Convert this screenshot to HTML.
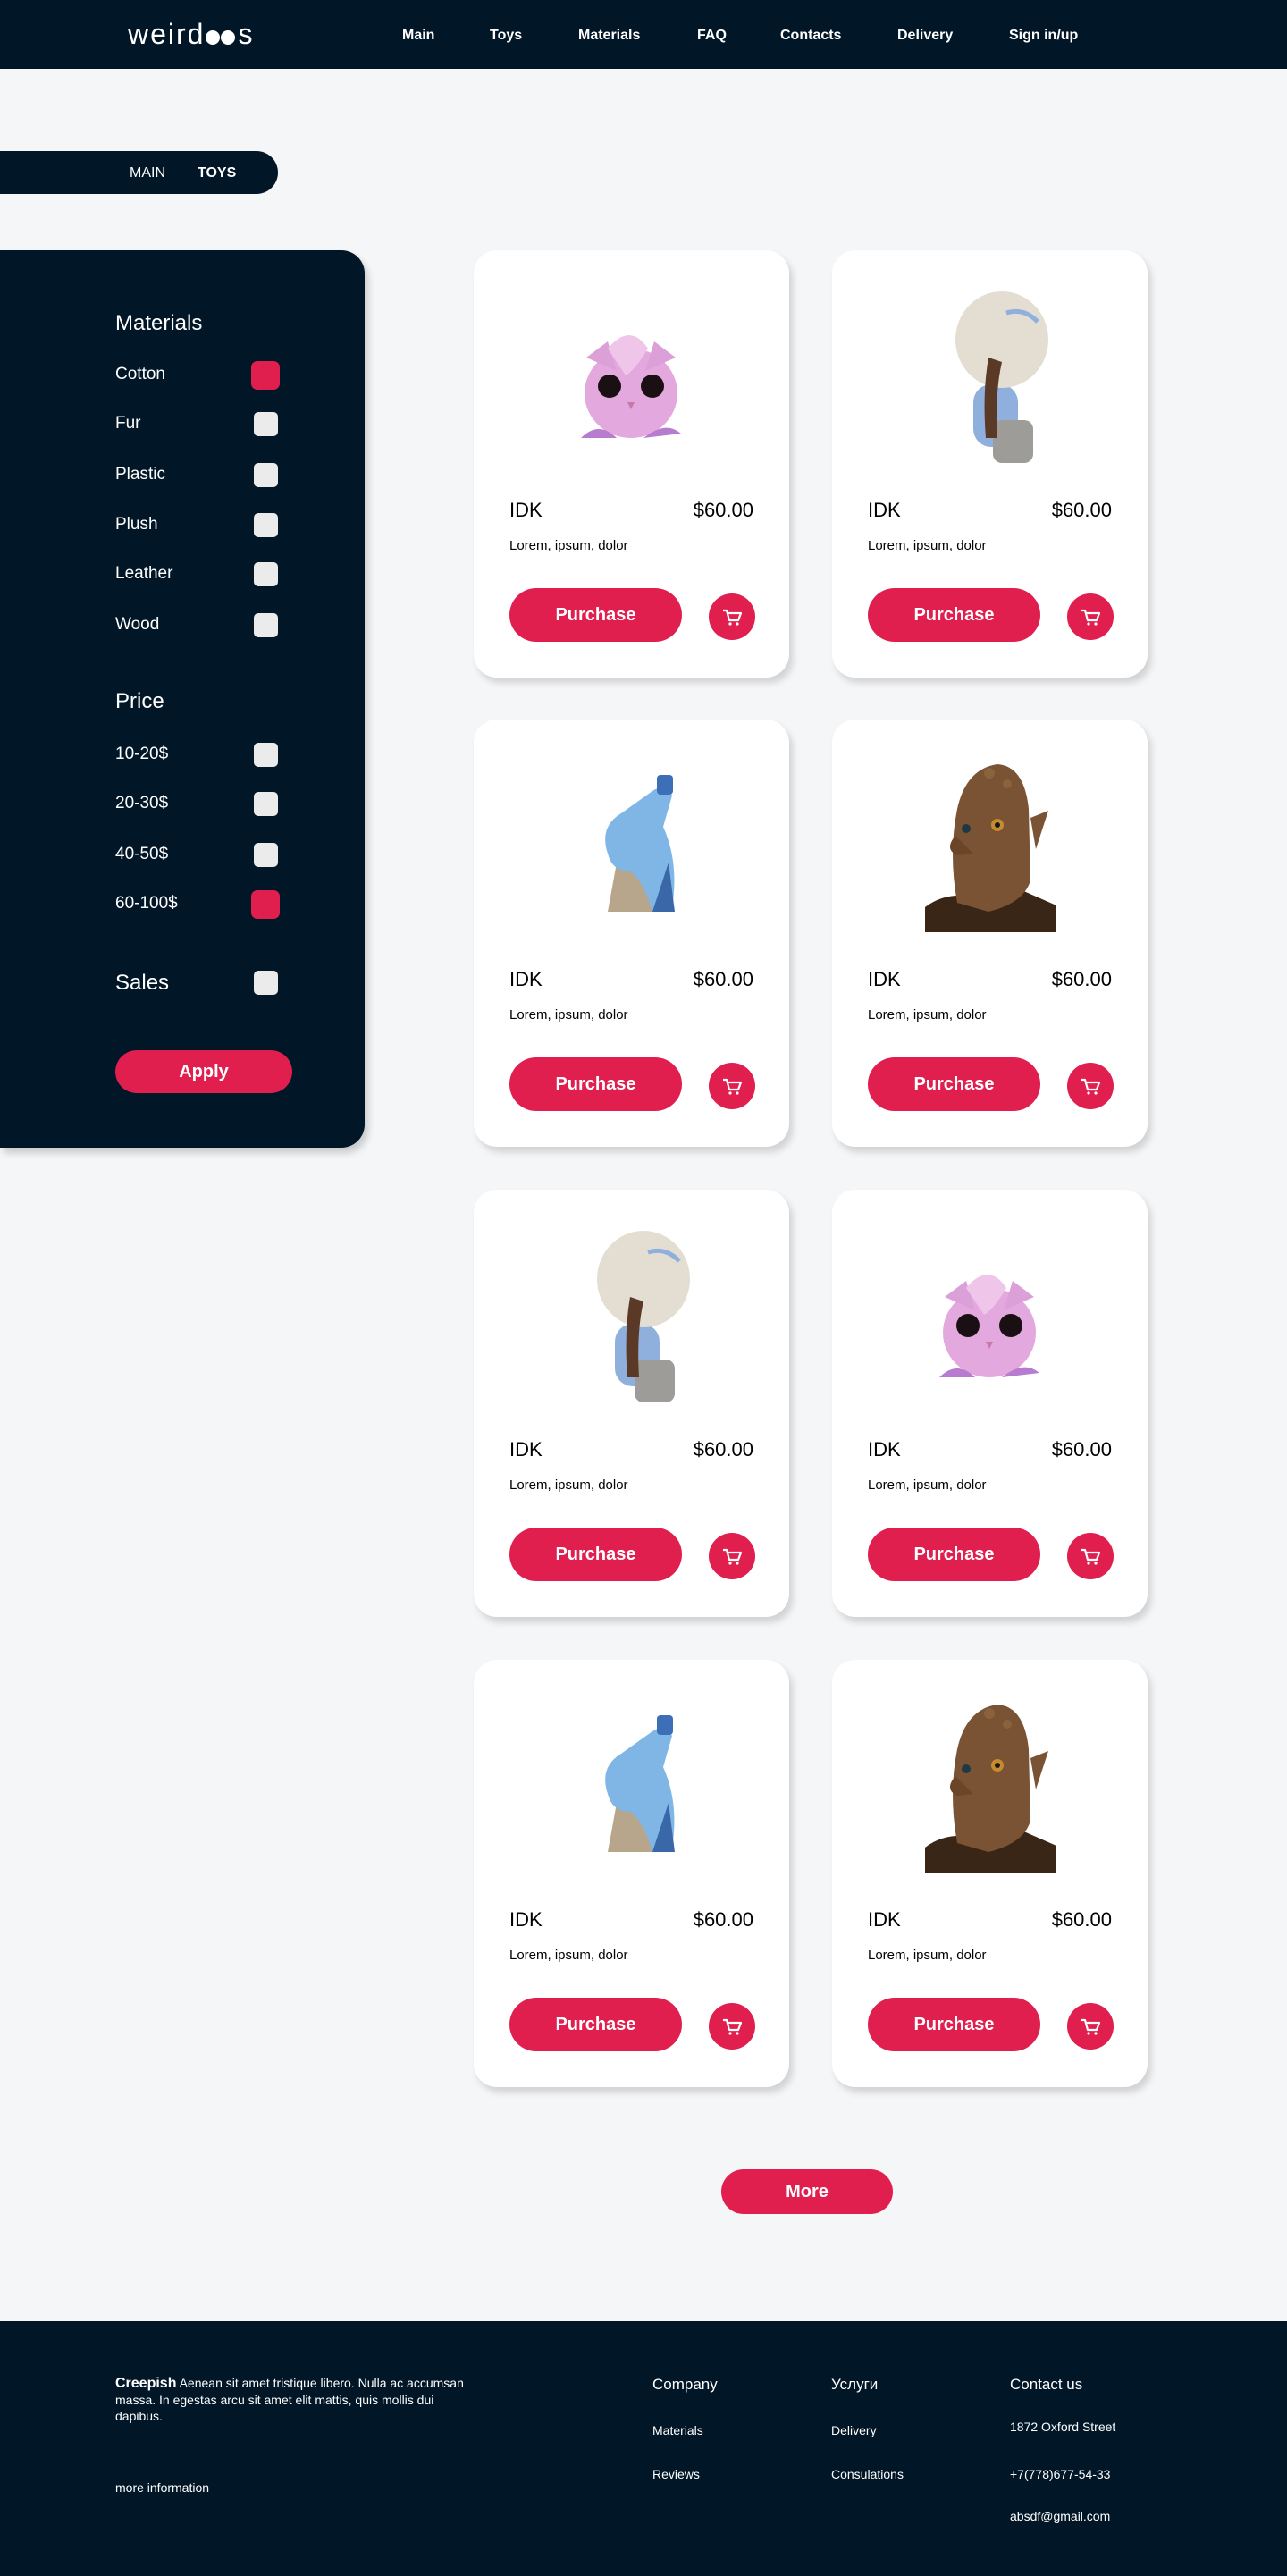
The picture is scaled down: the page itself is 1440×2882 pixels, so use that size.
<!DOCTYPE html>
<html><head><meta charset="utf-8">
<style>
*{margin:0;padding:0;box-sizing:border-box}
body{width:1440px;height:2882px;background:#f5f6f8;font-family:"Liberation Sans",Arial,sans-serif;position:relative;overflow:hidden}
.hdr{position:absolute;left:0;top:0;width:1440px;height:77px;background:#011627}
.logo{position:absolute;left:143px;top:20px;color:#fff;font-size:32px;letter-spacing:2px}
.nav a{position:absolute;top:31px;color:#fff;font-weight:bold;font-size:16px;text-decoration:none}
.crumb{position:absolute;left:0;top:169px;width:311px;height:48px;background:#011627;border-radius:0 24px 24px 0;color:#fff;font-size:16px}
.crumb span{position:absolute;top:16px}
.side{position:absolute;left:0;top:280px;width:408px;height:1004px;background:#011627;border-radius:0 26px 26px 0;box-shadow:4px 6px 8px rgba(0,0,0,.18);color:#fff}
.side h3{position:absolute;left:129px;font-weight:normal;font-size:24px}
.side .r{position:absolute;left:129px;font-size:19px}
.cb{position:absolute;left:284px;width:27px;height:27px;border-radius:5px;background:#ebebeb}
.cb.on{left:281px;width:32px;height:32px;background:#e01f4f;border-radius:7px}
.btn{position:absolute;background:#e01f4f;color:#fff;font-weight:bold;text-align:center;border-radius:30px}
.card{position:absolute;width:353px;height:478px;background:#fff;border-radius:26px;box-shadow:4px 6px 8px rgba(0,0,0,.15)}
.card svg{position:absolute;left:0;top:40px}
.card .n{position:absolute;left:40px;top:278px;font-size:22px;color:#000}
.card .p{position:absolute;right:40px;top:278px;font-size:22px;color:#000}
.card .d{position:absolute;left:40px;top:322px;font-size:15px;color:#000}
.card .pb{left:40px;top:378px;width:193px;height:60px;line-height:60px;font-size:20px}
.card .cart{position:absolute;left:263px;top:384px;width:52px;height:52px;border-radius:50%;background:#e01f4f}
.ft{position:absolute;left:0;top:2597px;width:1440px;height:285px;background:#011627;color:#fff}
.ft div{position:absolute}
</style></head><body>
<div class="hdr">
<div class="logo">weird<span style="display:inline-block;width:16px;height:16px;border-radius:50%;background:#fff;margin:0 1px -1px 1px"></span><span style="display:inline-block;width:16px;height:16px;border-radius:50%;background:#fff;margin:0 3px -1px 0"></span>s</div>
<div class="nav"><a style="left:450px">Main</a><a style="left:548px">Toys</a><a style="left:647px">Materials</a><a style="left:780px">FAQ</a><a style="left:873px">Contacts</a><a style="left:1004px">Delivery</a><a style="left:1129px">Sign in/up</a></div>
</div>
<div class="crumb"><span style="left:145px">MAIN</span><span style="left:221px;font-weight:bold">TOYS</span></div>

<div class="side">
<h3 style="top:68px">Materials</h3>
<div class="r" style="top:128px">Cotton</div><div class="cb on" style="top:124px"></div>
<div class="r" style="top:183px">Fur</div><div class="cb" style="top:181px"></div>
<div class="r" style="top:240px">Plastic</div><div class="cb" style="top:238px"></div>
<div class="r" style="top:296px">Plush</div><div class="cb" style="top:294px"></div>
<div class="r" style="top:351px">Leather</div><div class="cb" style="top:349px"></div>
<div class="r" style="top:408px">Wood</div><div class="cb" style="top:406px"></div>
<h3 style="top:491px">Price</h3>
<div class="r" style="top:553px">10-20$</div><div class="cb" style="top:551px"></div>
<div class="r" style="top:608px">20-30$</div><div class="cb" style="top:606px"></div>
<div class="r" style="top:665px">40-50$</div><div class="cb" style="top:663px"></div>
<div class="r" style="top:720px">60-100$</div><div class="cb on" style="top:716px"></div>
<h3 style="top:806px">Sales</h3><div class="cb" style="top:806px"></div>
<div class="btn" style="left:129px;top:895px;width:198px;height:48px;line-height:48px;font-size:20px">Apply</div>
</div>

<div id="cards"></div>

<div class="btn" style="left:807px;top:2427px;width:192px;height:50px;line-height:50px;font-size:20px">More</div>

<div class="ft">
<div style="left:129px;top:60px;width:390px;font-size:14px;line-height:18px"><b style="font-size:16px">Creepish</b> Aenean sit amet tristique libero. Nulla ac accumsan massa. In egestas arcu sit amet elit mattis, quis mollis dui dapibus.</div>
<div style="left:129px;top:178px;font-size:14px">more information</div>
<div style="left:730px;top:61px;font-size:17px">Company</div>
<div style="left:730px;top:114px;font-size:14px">Materials</div>
<div style="left:730px;top:163px;font-size:14px">Reviews</div>
<div style="left:930px;top:61px;font-size:17px">Услуги</div>
<div style="left:930px;top:114px;font-size:14px">Delivery</div>
<div style="left:930px;top:163px;font-size:14px">Consulations</div>
<div style="left:1130px;top:61px;font-size:17px">Contact us</div>
<div style="left:1130px;top:110px;font-size:14px">1872 Oxford Street</div>
<div style="left:1130px;top:163px;font-size:14px">+7(778)677-54-33</div>
<div style="left:1130px;top:210px;font-size:14px">absdf@gmail.com</div>
</div>

<script>
var T={
pink:'<ellipse cx="176" cy="120" rx="52" ry="50" fill="#e3a8dd"/><path d="M126 80 L150 62 L160 95Z M226 80 L202 62 L192 95Z" fill="#dca0d8"/><path d="M150 70 Q175 40 195 70 Q180 95 170 100Z" fill="#f0c5ea"/><circle cx="152" cy="112" r="13" fill="#1a1014"/><circle cx="200" cy="112" r="13" fill="#1a1014"/><path d="M120 170 Q140 150 160 170Z M190 170 Q215 150 232 165Z" fill="#b77ccf"/><path d="M172 130 l8 0 l-4 8z" fill="#c77aa9"/>',
thinker:'<rect x="158" y="110" width="50" height="70" rx="20" fill="#8fb0dd"/><rect x="180" y="150" width="45" height="48" rx="10" fill="#9e9c98"/><ellipse cx="190" cy="60" rx="52" ry="54" fill="#e4ddd2"/><path d="M175 80 Q168 120 172 170 L185 170 Q182 120 190 85Z" fill="#5a3a26"/><path d="M195 30 q20 -6 35 10" stroke="#8fb0dd" stroke-width="5" fill="none"/>',
plastic:'<path d="M150 175 L160 120 Q175 105 200 115 L205 175Z" fill="#b7a58c"/><path d="M150 110 Q140 80 165 65 L200 40 Q215 30 222 45 L212 80 Q230 120 222 170 L200 175 Q190 140 175 130 Q155 130 150 110Z" fill="#7fb6e6"/><rect x="205" y="22" width="18" height="22" rx="4" fill="#3d6fb8"/><path d="M200 175 L225 175 L218 120Z" fill="#3a67a8"/>',
wood:'<path d="M104 198 L104 170 Q130 150 170 160 L210 150 L251 168 L251 198Z" fill="#3a2616"/><path d="M140 165 Q130 110 140 60 Q150 15 185 10 Q215 12 220 60 L222 140 Q215 165 175 175 Z" fill="#7a5334"/><path d="M222 70 L242 62 L228 105Z" fill="#7a5334"/><path d="M138 90 Q125 105 140 112 L158 110 Z" fill="#6a4528"/><circle cx="185" cy="78" r="7" fill="#c88a2c"/><circle cx="185" cy="78" r="3" fill="#0e1c22"/><circle cx="150" cy="82" r="5" fill="#1f3844"/><circle cx="176" cy="20" r="6" fill="#8a623e"/><circle cx="196" cy="32" r="5" fill="#8a623e"/>'
};
var cart='<svg width="52" height="52" viewBox="0 0 52 52" style="position:static"><path d="M16 19h4l3 11h10l3-8H21" stroke="#fff" stroke-width="2.2" fill="none" stroke-linejoin="round"/><circle cx="24" cy="34" r="1.6" fill="#fff"/><circle cx="32" cy="34" r="1.6" fill="#fff"/></svg>';
var order=['pink','thinker','plastic','wood','thinker','pink','plastic','wood'];
var tops=[280,805,1331,1857],lefts=[530,931],h='';
order.forEach(function(k,i){
 var t=tops[Math.floor(i/2)],l=lefts[i%2];
 h+='<div class="card" style="left:'+l+'px;top:'+t+'px"><svg width="353" height="210" viewBox="0 0 353 210">'+T[k]+'</svg><div class="n">IDK</div><div class="p">$60.00</div><div class="d">Lorem, ipsum, dolor</div><div class="btn pb">Purchase</div><div class="cart">'+cart+'</div></div>';
});
document.getElementById('cards').innerHTML=h;
</script>
</body></html>
